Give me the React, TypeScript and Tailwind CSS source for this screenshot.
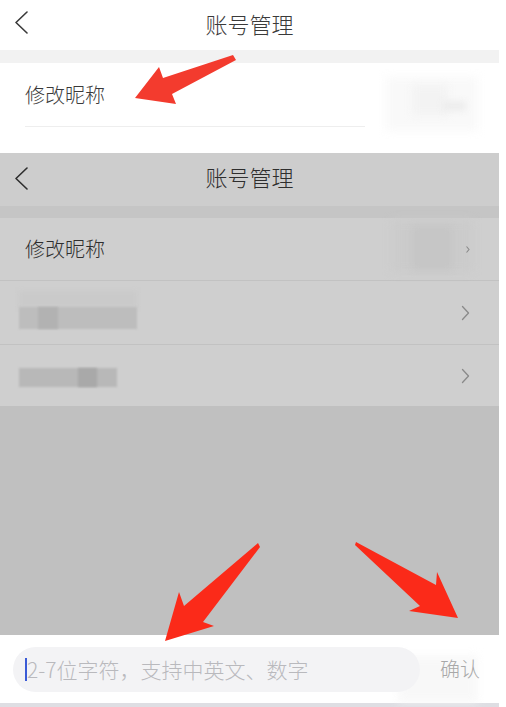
import React from "react";

const font = { fontFamily: '"Noto Sans CJK SC", "Noto Sans", sans-serif' };

function Chevron({ color }: { color: string }) {
  return (
    <svg width="16" height="24" viewBox="0 0 16 24" fill="none">
      <path d="M13 1 L2 11.5 L13 22" stroke={color} strokeWidth="1.6" strokeLinecap="round" strokeLinejoin="round" />
    </svg>
  );
}

function Right() {
  return (
    <svg width="9" height="16" viewBox="0 0 9 16" fill="none">
      <path d="M1.5 1.5 L7.5 8 L1.5 14.5" stroke="#8a8a8a" strokeWidth="1.3" strokeLinecap="round" strokeLinejoin="round" />
    </svg>
  );
}

export default function App() {
  return (
    <div className="relative w-[506px] h-[707px] overflow-hidden bg-white font-light" style={font}>
      <div className="w-[499px] flex flex-col">
        {/* Top screen */}
        <div className="h-[50px] relative flex items-center justify-center bg-white pb-[5px]">
          <div className="absolute left-[14px] top-[11px]">
            <Chevron color="#3a3a3a" />
          </div>
          <span className="text-[22px] text-[#3a3a3a] leading-none">账号管理</span>
        </div>
        <div className="h-[13px] bg-[#f2f2f2]" />
        <div className="h-[64px] bg-white flex items-center pl-[25px] relative">
          <span className="text-[20px] text-[#3a3a3a] leading-none">修改昵称</span>
          <div className="absolute left-[25px] right-[134px] bottom-0 h-px bg-[#eeeeee]" />
          <div className="absolute left-[386px] top-[14px] w-[92px] h-[54px] bg-[#f9f9f9] blur-[5px]" />
          <div className="absolute left-[412px] top-[22px] w-[36px] h-[30px] bg-[#f3f3f3] blur-[4px]" />
          <div className="absolute left-[442px] top-[38px] w-[24px] h-[10px] bg-[#ededed] blur-[3px]" />
        </div>
        <div className="h-[26px] bg-white" />

        {/* Second screen (dimmed) */}
        <div className="h-[53px] relative flex items-center justify-center bg-[#cdcdcd] pb-[7px]">
          <div className="absolute left-[14px] top-[14px]">
            <Chevron color="#2e2e2e" />
          </div>
          <span className="text-[22px] text-[#2e2e2e] leading-none">账号管理</span>
        </div>
        <div className="h-[12px] bg-[#c5c5c5]" />
        <div className="bg-[#cfcfcf] flex flex-col">
          <div className="h-[63px] relative flex items-center pl-[25px] border-b border-[#c2c2c2]">
            <span className="text-[20px] text-[#2e2e2e] leading-none">修改昵称</span>
            <div className="absolute left-[392px] top-[2px] w-[80px] h-[52px] bg-[#cbcbcb] blur-[4px]" />
            <div className="absolute left-[412px] top-[8px] w-[40px] h-[44px] bg-[#c6c6c6] blur-[3px]" />
            <svg className="absolute left-[466px] top-[28px]" width="4" height="7" viewBox="0 0 4 7" fill="none">
              <path d="M0.5 0.5 L3 3.5 L0.5 6.5" stroke="#8a8a8a" strokeWidth="1.1" />
            </svg>
          </div>
          <div className="h-[64px] relative flex items-center justify-end pr-[29px] border-b border-[#c2c2c2]">
            <div className="absolute left-[19px] top-[10px] w-[118px] h-[17px] bg-[#cacaca] blur-[2px]" />
            <div className="absolute left-[19px] top-[26px] w-[118px] h-[22px] bg-[#bdbdbd] blur-[1px]" />
            <div className="absolute left-[38px] top-[26px] w-[20px] h-[22px] bg-[#b2b2b2] blur-[1px]" />
            <Right />
          </div>
          <div className="h-[61px] relative flex items-center justify-end pr-[29px]">
            <div className="absolute left-[19px] top-[23px] w-[98px] h-[19px] bg-[#b8b8b8] blur-[1px]" />
            <div className="absolute left-[78px] top-[23px] w-[19px] h-[19px] bg-[#a9a9a9] blur-[1px]" />
            <Right />
          </div>
        </div>
        <div className="h-[229px] bg-[#c0c0c0]" />

        {/* Input bar */}
        <div className="h-[68px] bg-white flex items-center pl-[13px] relative">
          <div className="absolute left-[398px] top-[20px] w-[80px] h-[48px] bg-[#f6f6f6] blur-[4px] opacity-70" />
          <div className="relative shrink-0 w-[407px] h-[45px] rounded-full bg-[#f3f3f5] flex items-center pl-[12px]">
            <div className="w-[2px] h-[23px] bg-[#3b5bd6]" />
            <span className="whitespace-nowrap text-[21px] text-[#b9b9bd] leading-none">2-7位字符，支持中英文、数字</span>
          </div>
          <span className="relative shrink-0 whitespace-nowrap ml-[20px] text-[20px] text-[#a8a8a8] leading-none">确认</span>
        </div>
        <div className="h-[4px] bg-[#dedee3]" />
      </div>

      {/* Annotation arrows */}
      <svg className="absolute left-0 top-0 pointer-events-none" width="506" height="707" viewBox="0 0 506 707">
        <polygon points="135,98 159,67 163,78 233,55 236,60 172,94 176,104" fill="#f33b2e" />
        <polygon points="165,641 179,592 184,606 258,543 260,547 203,622 214,626" fill="#fb2a19" />
        <polygon points="356,542 436,585 437,572 458,618 409,611 420,606 355,545" fill="#fb2a19" />
      </svg>
    </div>
  );
}
